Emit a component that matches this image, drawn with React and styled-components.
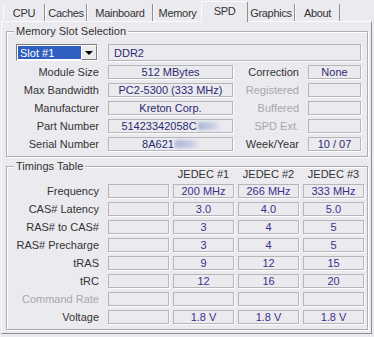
import React from 'react'
import styled, { createGlobalStyle } from 'styled-components'

const bg = '#ebeaee'
const dark = '#8e8e92'

const GlobalStyle = createGlobalStyle`
  html, body {
    margin: 0;
    padding: 0;
    background: ${bg};
  }
  body {
    font-family: "Liberation Sans", Arial, sans-serif;
    font-size: 11px;
    color: #333;
  }
`

const Window = styled.div`
  width: 374px;
  height: 337px;
  box-sizing: border-box;
  padding: 0 2px 0 1px;
  background: ${bg};
  overflow: hidden;
`

const TabBar = styled.div`
  display: flex;
  align-items: flex-end;
  height: 22px;
  padding-left: 2px;
  position: relative;
  z-index: 1;
`

const Tab = styled.div`
  box-sizing: border-box;
  width: ${p => p.$w}px;
  height: ${p => (p.$active ? '21px' : '18px')};
  margin-bottom: ${p => (p.$active ? '0' : '1px')};
  margin-left: ${p => (p.$active ? '-1px' : '0')};
  margin-right: ${p => (p.$active ? '-1px' : '0')};
  padding-bottom: ${p => (p.$active ? '3px' : '0')};
  display: flex;
  align-items: center;
  justify-content: center;
  background: ${bg};
  border-top: 1px solid ${p => (p.$active ? '#fbfbfd' : bg)};
  border-left: 1px solid #fbfbfd;
  border-right: 1px solid ${dark};
  border-radius: 2px 2px 0 0;
  color: #333;
  letter-spacing: -0.3px;
  white-space: nowrap;
  position: relative;
  z-index: ${p => (p.$active ? 2 : 1)};
`

const Panel = styled.div`
  box-sizing: border-box;
  height: 313px;
  margin-top: -1px;
  padding: 9px 3px 0 4px;
  border-top: 1px solid #fbfbfd;
  border-left: 1px solid #fbfbfd;
  border-right: 1px solid ${dark};
  border-bottom: 1px solid ${dark};
`

const Group = styled.div`
  position: relative;
  box-sizing: border-box;
  width: 362px;
  margin-top: ${p => p.$gap || 0}px;
  padding: ${p => p.$pad};
  border: 1px solid #aeaeb2;
  box-shadow: inset 1px 1px 0 #fff, 1px 1px 0 #fff;
`

const Legend = styled.span`
  position: absolute;
  top: -7px;
  left: 7px;
  padding: 0 2px;
  background: ${bg};
  line-height: 13px;
  color: #333;
`

const SlotGrid = styled.div`
  display: grid;
  grid-template-columns: 92px 125px 59px 53px;
  grid-template-rows: 17px repeat(5, 14px);
  column-gap: 8px;
  row-gap: 4px;
  padding-left: 1px;
`

const Label = styled.div`
  display: flex;
  align-items: center;
  justify-content: flex-end;
  padding-right: ${p => p.$pr || 1}px;
  color: ${p => (p.$off ? '#a8a8ac' : '#333')};
  white-space: nowrap;
  line-height: 14px;
`

const Field = styled.div`
  box-sizing: border-box;
  display: flex;
  align-items: center;
  justify-content: ${p => (p.$left ? 'flex-start' : 'center')};
  padding: 0 ${p => (p.$left ? '5px' : '2px')};
  grid-column: ${p => p.$span || 'auto'};
  border: 1px solid #b6b6ba;
  box-shadow: 1px 1px 0 #fdfdff;
  color: ${p => p.$tone || '#2a2a72'};
  white-space: nowrap;
  overflow: hidden;
  line-height: 12px;
`

const Combo = styled.div`
  box-sizing: border-box;
  display: flex;
  margin-left: 8px;
  width: 82px;
  height: 17px;
  border: 1px solid;
  border-color: #7c7c80 #fdfdff #fdfdff #7c7c80;
  background: #fff;
`

const ComboValue = styled.div`
  flex: 1;
  display: flex;
  align-items: center;
  margin: 1px 0 1px 1px;
  padding-left: 2px;
  background: #2f5fc0;
  color: #fff;
`

const ComboButton = styled.div`
  box-sizing: border-box;
  width: 16px;
  display: flex;
  align-items: center;
  justify-content: center;
  background: ${bg};
  border: 1px solid;
  border-color: #fdfdff #7c7c80 #7c7c80 #fdfdff;
`

const Arrow = styled.span`
  width: 0;
  height: 0;
  border-left: 4px solid transparent;
  border-right: 4px solid transparent;
  border-top: 4px solid #000;
`

const Smudge = styled.span`
  display: inline-block;
  width: ${p => p.$w}px;
  height: 8px;
  margin-left: 1px;
  background: linear-gradient(90deg, #aeb7d6, #c3c9e0 60%, #e2e3ec);
  filter: blur(1.4px);
`

const TimingGrid = styled.div`
  display: grid;
  grid-template-columns: 96px repeat(4, 61px);
  grid-template-rows: 12px repeat(8, 14px);
  column-gap: 4px;
  row-gap: 4px;
  padding-left: 1px;
`

const ColHead = styled.div`
  display: flex;
  align-items: center;
  justify-content: center;
  line-height: 12px;
  color: #333;
`

const tabs = [
  ['CPU', 42],
  ['Caches', 42],
  ['Mainboard', 66],
  ['Memory', 49],
  ['SPD', 47],
  ['Graphics', 48],
  ['About', 45],
]

const slotRows = [
  ['Module Size', '512 MBytes', 'Correction', 'None', false],
  ['Max Bandwidth', 'PC2-5300 (333 MHz)', 'Registered', '', true],
  ['Manufacturer', 'Kreton Corp.', 'Buffered', '', true],
  ['Part Number', 'part', 'SPD Ext.', '', true],
  ['Serial Number', 'serial', 'Week/Year', '10 / 07', false],
]

const timings = [
  ['Frequency', '200 MHz', '266 MHz', '333 MHz'],
  ['CAS# Latency', '3.0', '4.0', '5.0'],
  ['RAS# to CAS#', '3', '4', '5'],
  ['RAS# Precharge', '3', '4', '5'],
  ['tRAS', '9', '12', '15'],
  ['tRC', '12', '16', '20'],
  ['Command Rate', '', '', '', true],
  ['Voltage', '1.8 V', '1.8 V', '1.8 V'],
]

const renderValue = v => {
  if (v === 'part') return <>51423342058C<Smudge $w={22} /></>
  if (v === 'serial') return <>8A621<Smudge $w={24} /></>
  return v
}

export default function App() {
  return (
    <Window>
      <GlobalStyle />
      <TabBar>
        {tabs.map(([t, w]) => (
          <Tab key={t} $w={w} $active={t === 'SPD'}>{t}</Tab>
        ))}
      </TabBar>
      <Panel>
        <Group $pad="12px 5px 5px 0">
          <Legend>Memory Slot Selection</Legend>
          <SlotGrid>
            <Combo>
              <ComboValue>Slot #1</ComboValue>
              <ComboButton><Arrow /></ComboButton>
            </Combo>
            <Field $span="2 / 5" $left>DDR2</Field>
            {slotRows.map(([l, v, l2, v2, off]) => (
              <React.Fragment key={l}>
                <Label>{l}</Label>
                <Field>{renderValue(v)}</Field>
                <Label $off={off}>{l2}</Label>
                <Field>{v2}</Field>
              </React.Fragment>
            ))}
          </SlotGrid>
        </Group>
        <Group $gap={9} $pad="1px 5px 5px 0">
          <Legend>Timings Table</Legend>
          <TimingGrid>
            <div />
            <div />
            <ColHead>JEDEC #1</ColHead>
            <ColHead>JEDEC #2</ColHead>
            <ColHead>JEDEC #3</ColHead>
            {timings.map(([l, a, b, c, off]) => (
              <React.Fragment key={l}>
                <Label $pr={5} $off={off}>{l}</Label>
                <Field />
                <Field $tone="#3d2f8c">{a}</Field>
                <Field $tone="#3d2f8c">{b}</Field>
                <Field $tone="#3d2f8c">{c}</Field>
              </React.Fragment>
            ))}
          </TimingGrid>
        </Group>
      </Panel>
    </Window>
  )
}
